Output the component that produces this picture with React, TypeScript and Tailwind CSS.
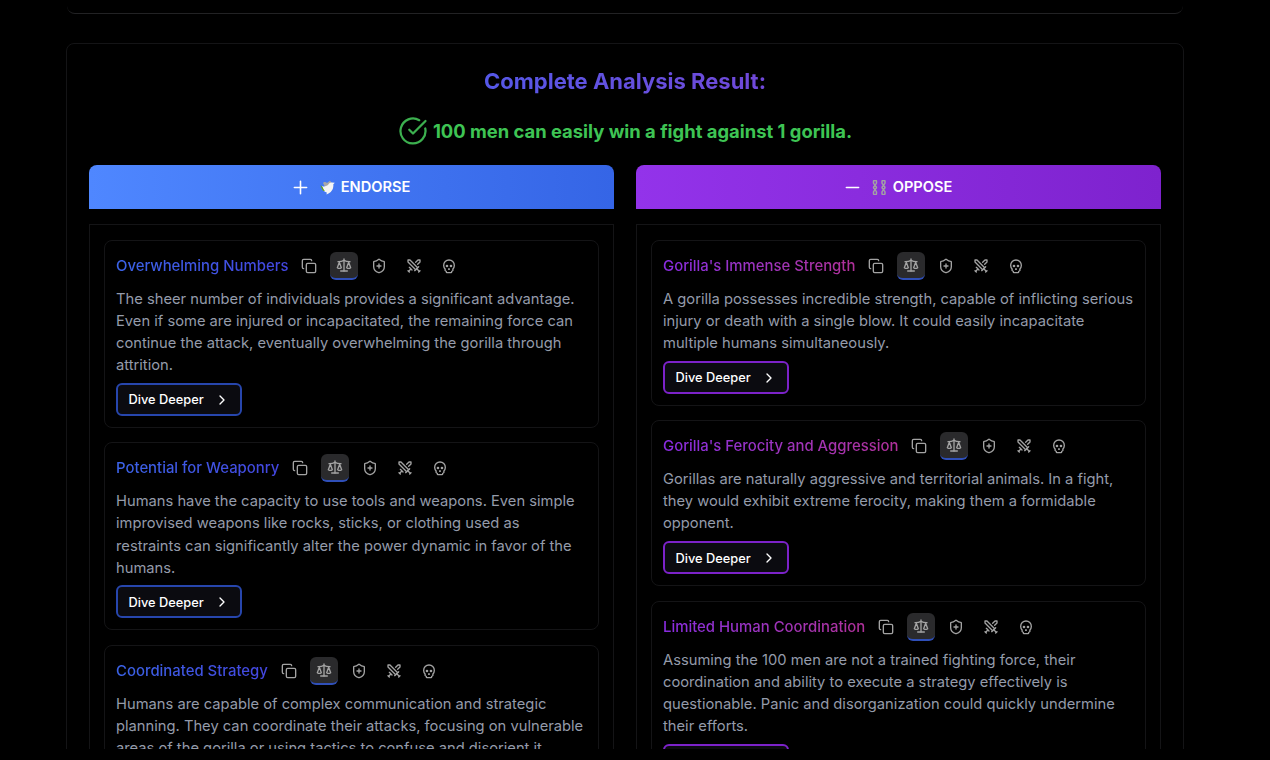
import { Copy, Scale, ShieldPlus, Swords, Skull, Plus, Minus, ChevronRight, CircleCheckBig } from "lucide-react";

type Item = { title: string; body: string };

const endorse: Item[] = [
  { title: "Overwhelming Numbers", body: "The sheer number of individuals provides a significant advantage. Even if some are injured or incapacitated, the remaining force can continue the attack, eventually overwhelming the gorilla through attrition." },
  { title: "Potential for Weaponry", body: "Humans have the capacity to use tools and weapons. Even simple improvised weapons like rocks, sticks, or clothing used as restraints can significantly alter the power dynamic in favor of the humans." },
  { title: "Coordinated Strategy", body: "Humans are capable of complex communication and strategic planning. They can coordinate their attacks, focusing on vulnerable areas of the gorilla or using tactics to confuse and disorient it." },
];

const oppose: Item[] = [
  { title: "Gorilla's Immense Strength", body: "A gorilla possesses incredible strength, capable of inflicting serious injury or death with a single blow. It could easily incapacitate multiple humans simultaneously." },
  { title: "Gorilla's Ferocity and Aggression", body: "Gorillas are naturally aggressive and territorial animals. In a fight, they would exhibit extreme ferocity, making them a formidable opponent." },
  { title: "Limited Human Coordination", body: "Assuming the 100 men are not a trained fighting force, their coordination and ability to execute a strategy effectively is questionable. Panic and disorganization could quickly undermine their efforts." },
];

function Dove() {
  return (
    <svg width="15" height="15" viewBox="0 0 15 15" className="shrink-0">
      <path d="M3 3 C4 1.5 6 2 7 3 L10 0.8 L11.5 2.5 L9 6 L5 7 Z" fill="#a8a8a8" />
      <path d="M2 6 C4 7 6 6.5 8 5 C8.5 3.5 10.5 2 12 2.5 L14.8 2.8 L13.3 4.3 C13.8 8 12 12 8.5 13.5 L6.5 14.5 L6.8 12.5 C4 12 2.5 9.5 2 6 Z" fill="#f5f5f5" />
      <path d="M0.5 5 L2.5 7 L4 10 L5 11 L3 10.8 L1.5 8 Z" fill="#65a30d" />
    </svg>
  );
}

function Chains() {
  const link = "C0 0 3 0 3 1.5 L3 3 C3 4 1.5 4.5 1.5 5.5 C1.5 6 3 6.5 3 7.5 C3 8.5 1.5 9 1.5 9.5 C1.5 10.5 3 11 3 12 L3 13.5 C3 15 0 15 0 13.5 L0 12 C0 11 1.5 10.5 1.5 9.5 C1.5 9 0 8.5 0 7.5 C0 6.5 1.5 6 1.5 5.5 C1.5 4.5 0 4 0 3 L0 1.5 Z";
  return (
    <svg width="15" height="15" viewBox="0 0 15 15" fill="none" stroke="#a3a3a3" strokeWidth="1.5" className="shrink-0">
      <path d={`M0 1.5 ${link}`} transform="translate(1.5 0)" />
      <path d={`M0 1.5 ${link}`} transform="translate(10 0)" />
    </svg>
  );
}

function ToolButton({ children, active, underline }: { children: React.ReactNode; active?: boolean; underline?: string }) {
  return (
    <span className={`flex h-7 w-7 shrink-0 items-center justify-center rounded-md text-[#a3a3a3] ${active ? "border-b-2 bg-[#2a2a2c] " + underline : ""}`}>
      {children}
    </span>
  );
}

function Card({ item, kind }: { item: Item; kind: "blue" | "purple" }) {
  const blue = kind === "blue";
  return (
    <div className="rounded-lg border border-[#141416] p-[11px]">
      <div className="flex h-7 items-center gap-[7px]">
        <h3 className={`bg-gradient-to-r bg-clip-text text-[14.9px] font-medium leading-7 text-transparent ${blue ? "from-[#3b63e8] to-[#4346e0]" : "from-[#8a2be2] to-[#b0309a]"}`}>{item.title}</h3>
        <ToolButton><Copy size={16} strokeWidth={2} /></ToolButton>
        <ToolButton active underline="border-[#2f4fb8]"><Scale size={16} strokeWidth={2} /></ToolButton>
        <ToolButton><ShieldPlus size={16} strokeWidth={2} /></ToolButton>
        <ToolButton><Swords size={16} strokeWidth={2} /></ToolButton>
        <ToolButton><Skull size={16} strokeWidth={2} /></ToolButton>
      </div>
      <p className="mt-[8px] text-[14.72px] leading-[22.08px] text-[#949baa]">{item.body}</p>
      <button className={`mt-[6.7px] flex h-[33px] w-[126px] items-center gap-[10px] rounded-md border-2 bg-[#0b0b10] pl-[10.5px] pt-[1px] text-[12.8px] font-medium text-white ${blue ? "border-[#2746ad]" : "border-[#7c22c9]"}`}>
        Dive Deeper
        <ChevronRight size={16} strokeWidth={2} />
      </button>
    </div>
  );
}

function Column({ items, kind }: { items: Item[]; kind: "blue" | "purple" }) {
  const blue = kind === "blue";
  return (
    <div className="min-w-0 flex-1">
      <div className={`flex h-[44px] items-center justify-center rounded-t-lg pr-[3px] pt-[1px] text-[14.6px] font-semibold text-white ${blue ? "bg-gradient-to-r from-[#4f87ff] to-[#3565e6]" : "bg-gradient-to-r from-[#9333ea] to-[#7e22ce]"}`}>
        {blue ? <Plus size={21} strokeWidth={1.8} className="mr-[9px]" /> : <Minus size={21} strokeWidth={1.8} className="mr-[9px]" />}
        {blue ? <Dove /> : <Chains />}
        <span className="ml-[6px]">{blue ? "ENDORSE" : "OPPOSE"}</span>
      </div>
      <div className="mt-[15px] flex flex-col gap-[14.4px] border border-[#141416] px-[14px] pt-[15px]">
        {items.map((item) => <Card key={item.title} item={item} kind={kind} />)}
      </div>
    </div>
  );
}

export default function App() {
  return (
    <div className="h-[760px] overflow-hidden bg-black" style={{ fontFamily: "Inter, sans-serif" }}>
      <div className="ml-[66px] h-[749px] w-[1118px] overflow-hidden">
        <div className="ml-[1px] h-[14px] w-[1116px] rounded-b-lg border-b border-[#222224]" />
        <div className="mt-[29px] rounded-lg border border-[#141416] px-[22px] pt-[22px]">
          <h2 className="mx-auto w-fit bg-gradient-to-r from-[#5558e8] to-[#7048d8] bg-clip-text text-[22px] font-bold leading-[30px] text-transparent">Complete Analysis Result:</h2>
          <div className="mt-[19px] flex h-[32px] items-center justify-center gap-[5px]">
            <CircleCheckBig size={30} strokeWidth={1.8} className="text-[#3cb04f]" />
            <span className="pt-[1px] text-[18.4px] font-bold text-[#3ec454]">100 men can easily win a fight against 1 gorilla.</span>
          </div>
          <div className="mt-[18px] flex gap-[22px]">
            <Column items={endorse} kind="blue" />
            <Column items={oppose} kind="purple" />
          </div>
        </div>
      </div>
    </div>
  );
}
